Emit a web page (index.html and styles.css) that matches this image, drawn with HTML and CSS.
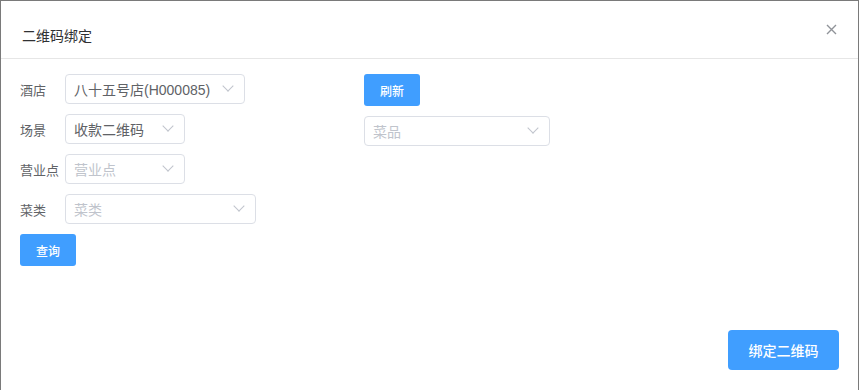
FILE: index.html
```html
<!DOCTYPE HTML>
<html lang="zh-CN">
<head>
<meta charset="UTF-8">
<title>二维码绑定</title>
<link rel="stylesheet" href="styles.css">
</head>
<body>
<div class="dialog">
    <div class="dialog-header">
        <span class="dialog-title">二维码绑定</span>
        <button class="dialog-close" aria-label="关闭">
            <svg width="11" height="11" viewBox="0 0 11 11"><path d="M1 1L10 10M10 1L1 10" stroke="#909399" stroke-width="1.4" fill="none"/></svg>
        </button>
    </div>

    <div class="dialog-body">
        <div class="col-left">
            <div class="form-row">
                <label class="form-label">酒店</label>
                <div class="select w180"><span class="select-value">八十五号店(H000085)</span><span class="arrow"></span></div>
            </div>
            <div class="form-row">
                <label class="form-label">场景</label>
                <div class="select w120"><span class="select-value">收款二维码</span><span class="arrow"></span></div>
            </div>
            <div class="form-row">
                <label class="form-label">营业点</label>
                <div class="select w120"><span class="select-value placeholder">营业点</span><span class="arrow"></span></div>
            </div>
            <div class="form-row">
                <label class="form-label">菜类</label>
                <div class="select w191"><span class="select-value placeholder">菜类</span><span class="arrow"></span></div>
            </div>
            <button class="btn">查询</button>
        </div>

        <div class="col-right">
            <button class="btn">刷新</button>
            <div class="select w186"><span class="select-value placeholder">菜品</span><span class="arrow"></span></div>
        </div>
    </div>

    <div class="dialog-footer">
        <button class="btn btn-large">绑定二维码</button>
    </div>
</div>
</body>
</html>
```

FILE: styles.css
```css
  body {
    margin: 0;
    background-color: #fff;
    font-family: 'Liberation Sans', 'Noto Sans CJK SC', sans-serif;
  }

  .dialog {
    width: 857px;
    height: 389px;
    border: 1px solid #7a7a7a;
    border-bottom: none;
    background: #fff;
    display: flex;
    flex-direction: column;
  }

  /* header */
  .dialog-header {
    position: relative;
    padding: 25px 21px 12px;
    border-bottom: 1px solid #e6e6e6;
  }

  .dialog-title {
    display: block;
    font-size: 14px;
    line-height: 20px;
    color: #303133;
  }

  .dialog-close {
    position: absolute;
    top: 23px;
    right: 21px;
    width: 11px;
    height: 11px;
    padding: 0;
    border: none;
    background: transparent;
    cursor: pointer;
  }

  .dialog-close svg {
    display: block;
  }

  /* body */
  .dialog-body {
    display: grid;
    grid-template-columns: 344px auto;
    padding: 15px 19px 0;
  }

  .col-left, .col-right {
    display: flex;
    flex-direction: column;
    align-items: flex-start;
    gap: 10px;
  }

  .form-row {
    display: flex;
    align-items: center;
  }

  .form-label {
    width: 45px;
    font-size: 13px;
    color: #606266;
  }

  .select {
    box-sizing: border-box;
    height: 30px;
    border: 1px solid #dcdfe6;
    border-radius: 4px;
    display: flex;
    align-items: center;
    justify-content: space-between;
    padding: 0 12px 0 8px;
  }

  .w120 { width: 120px; }
  .w180 { width: 180px; }
  .w186 { width: 186px; }
  .w191 { width: 191px; }

  .select-value {
    font-size: 14px;
    color: #606266;
    white-space: nowrap;
  }

  .select-value.placeholder {
    color: #c0c4cc;
  }

  /* chevron */
  .arrow {
    width: 7px;
    height: 7px;
    border-right: 1px solid #c0c4cc;
    border-bottom: 1px solid #c0c4cc;
    transform: translateY(-3px) rotate(45deg);
  }

  .btn {
    height: 32px;
    width: 56px;
    padding: 0;
    border: none;
    border-radius: 3px;
    background-color: #409eff;
    color: #fff;
    font-family: inherit;
    font-size: 12px;
    font-weight: 500;
    cursor: pointer;
  }

  /* footer */
  .dialog-footer {
    display: flex;
    justify-content: flex-end;
    padding: 64px 19px 20px;
  }

  .btn-large {
    width: 111px;
    height: 40px;
    border-radius: 4px;
    font-size: 14px;
  }
```
